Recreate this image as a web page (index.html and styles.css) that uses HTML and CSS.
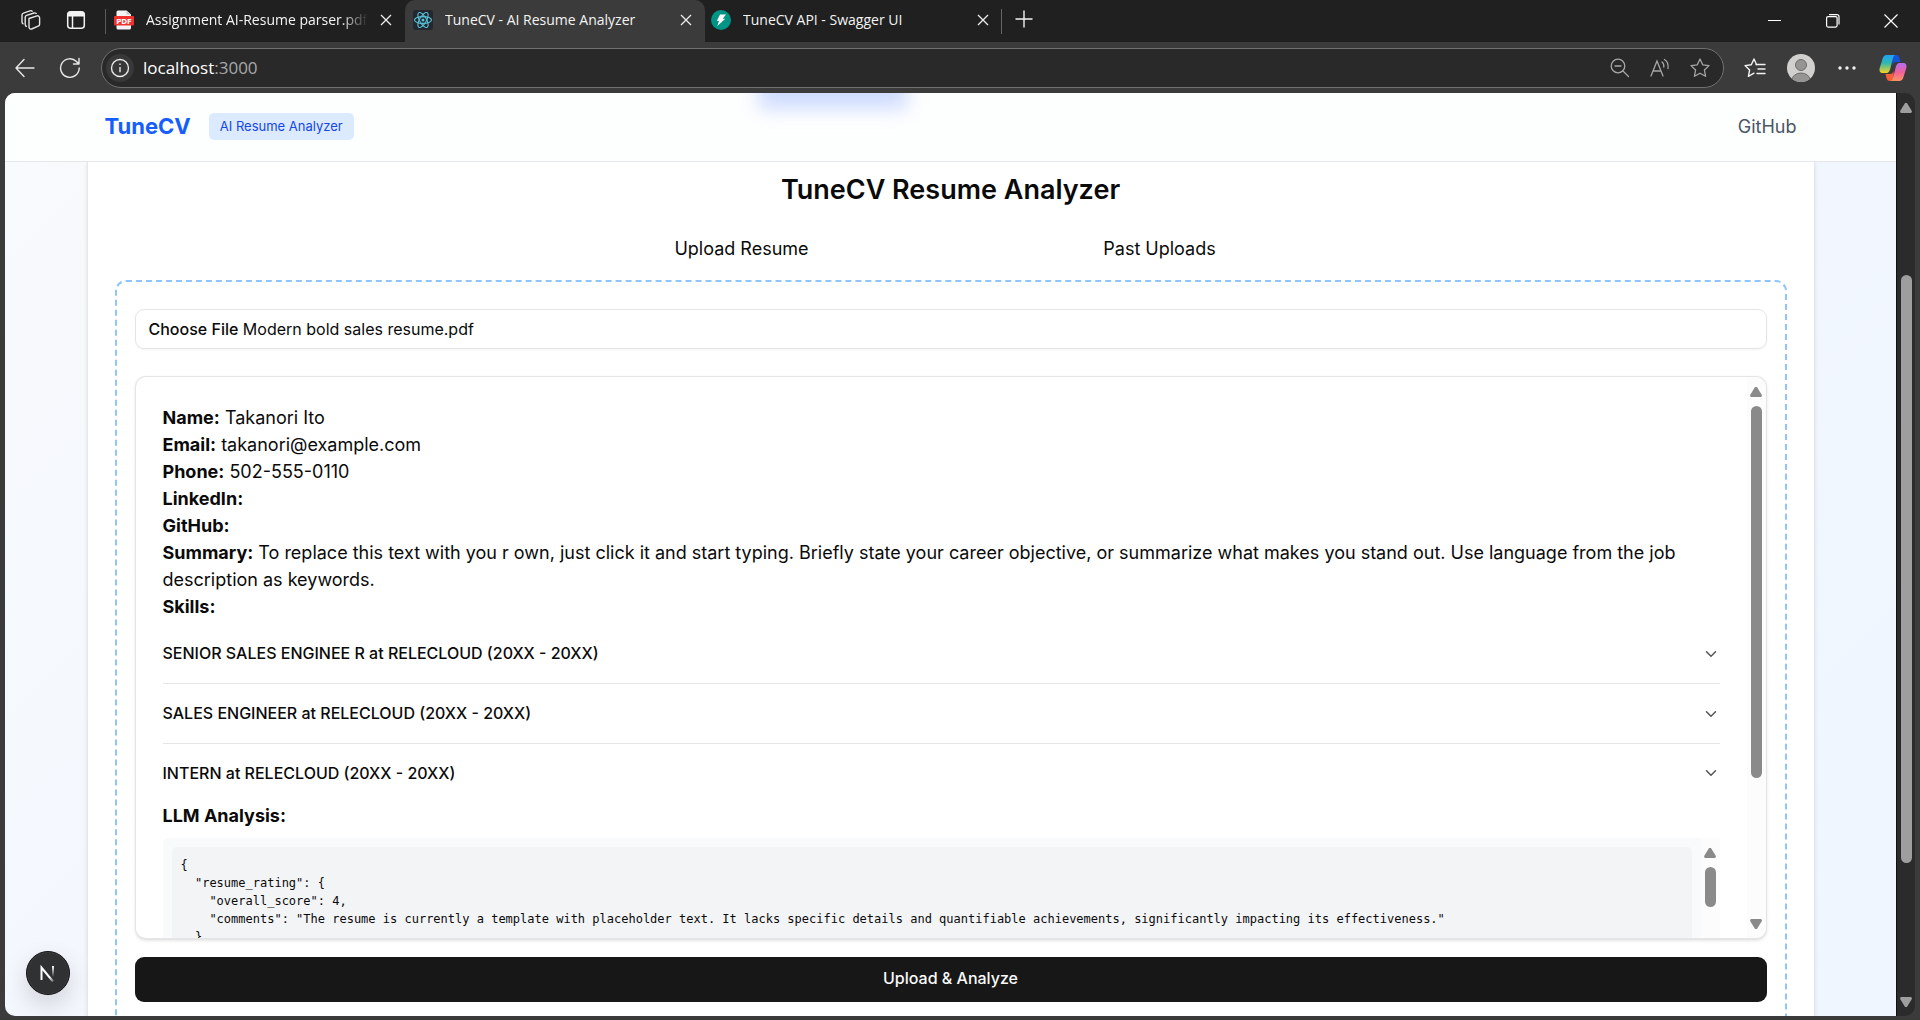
FILE: index.html
```html
<!DOCTYPE html>
<html lang="en">
<head>
<meta charset="utf-8">
<title>TuneCV - AI Resume Analyzer</title>
<link rel="stylesheet" href="styles.css">
</head>
<body>
<div class="browser">
  <div class="titlebar">
    <div class="title-tools">
      <button class="icon-btn" aria-label="Workspaces"><svg width="22" height="22" viewBox="0 0 22 22" fill="none" stroke="#e6e6e6" stroke-width="1.4" stroke-linejoin="round"><path d="M9 9.500l8-2.600a2 2 0 0 1 2.600 1.900v6.500a2 2 0 0 1-1.400 1.900L11.600 20a2 2 0 0 1-2.600-1.900z"/><path d="M7 17.500a2 2 0 0 1-1.800-2V8.300a2 2 0 0 1 1.400-1.900L14 4c1.200-.3 2.200.2 2.500 1"/><path d="M3.500 15A2 2 0 0 1 2 13V6a2 2 0 0 1 1.400-1.900L10 1.800c1-.3 2 0 2.500.8"/></svg></button>
      <button class="icon-btn" aria-label="Tab actions"><svg width="20" height="20" viewBox="0 0 20 20" fill="none"><rect x="1.700" y="1.700" width="16.600" height="16.600" rx="3" stroke="#f2f2f2" stroke-width="1.500"/><path d="M1.500 6.500V4.500a3 3 0 0 1 3-3h11a3 3 0 0 1 3 3v2z" fill="#f2f2f2"/><path d="M6.500 6v12" stroke="#f2f2f2" stroke-width="1.500"/></svg></button>
    </div>
    <div class="tab tab-first">
      <svg width="20" height="20" viewBox="0 0 20 20"><path d="M2.500 2a1.500 1.500 0 0 1 1.500-1.500h8.500l4.500 4V18a1.500 1.500 0 0 1-1.500 1.500H4A1.500 1.500 0 0 1 2.500 18z" fill="#f4f4f4"/><path d="M12.500.5v4H17z" fill="#c9c9c9"/><rect y="6" width="20" height="9.500" rx="1" fill="#f0322f"/><text x="10" y="13.500" text-anchor="middle" class="pdf-mark">PDF</text></svg>
      <span class="tab-title fade">Assignment AI-Resume parser.pdf</span>
      <button class="close" aria-label="Close tab"><svg width="12" height="12" viewBox="0 0 12 12" stroke="#eee" stroke-width="1.300"><path d="M1 1l10 10M11 1L1 11"/></svg></button>
    </div>
    <div class="tab tab-active">
      <svg width="20" height="20" viewBox="0 0 20 20" fill="none" stroke="#58c4dc" stroke-width="1.100"><rect width="20" height="20" rx="3" fill="#23272f" stroke="none"/><ellipse cx="10" cy="10" rx="8.500" ry="3.400"/><ellipse cx="10" cy="10" rx="8.500" ry="3.400" transform="rotate(60 10 10)"/><ellipse cx="10" cy="10" rx="8.500" ry="3.400" transform="rotate(120 10 10)"/><circle cx="10" cy="10" r="1.500" fill="#58c4dc" stroke="none"/></svg>
      <span class="tab-title">TuneCV - AI Resume Analyzer</span>
      <button class="close" aria-label="Close tab"><svg width="12" height="12" viewBox="0 0 12 12" stroke="#eee" stroke-width="1.300"><path d="M1 1l10 10M11 1L1 11"/></svg></button>
    </div>
    <div class="tab tab-last">
      <svg width="20" height="20" viewBox="0 0 20 20"><circle cx="10" cy="10" r="10" fill="#009485"/><path d="M9 4.500h6l-3.300 4.200h2.600L6.300 16l1.700-5H5.800z" fill="#fff"/></svg>
      <span class="tab-title">TuneCV API - Swagger UI</span>
      <button class="close" aria-label="Close tab"><svg width="12" height="12" viewBox="0 0 12 12" stroke="#eee" stroke-width="1.300"><path d="M1 1l10 10M11 1L1 11"/></svg></button>
    </div>
    <button class="icon-btn new-tab" aria-label="New tab"><svg width="18" height="18" viewBox="0 0 18 18" stroke="#f2f2f2" stroke-width="1.400"><path d="M9 .5v17M.5 9h17"/></svg></button>
    <div class="window-controls">
      <button class="icon-btn" aria-label="Minimize"><svg width="14" height="14" viewBox="0 0 14 14" stroke="#fff"><path d="M0 6.500h13"/></svg></button>
      <button class="icon-btn" aria-label="Restore"><svg width="14" height="14" viewBox="0 0 14 14" fill="none" stroke="#fff" stroke-width="1.200"><rect x=".600" y="2.600" width="10.500" height="10.500" rx="1.500"/><path d="M3 .6h8a2 2 0 0 1 2 2v8"/></svg></button>
      <button class="icon-btn" aria-label="Close"><svg width="14" height="14" viewBox="0 0 14 14" stroke="#fff" stroke-width="1.200"><path d="M.5.5l13 13M13.500.5l-13 13"/></svg></button>
    </div>
  </div>

  <div class="toolbar">
    <button class="icon-btn" aria-label="Back"><svg width="20" height="20" viewBox="0 0 20 20" fill="none" stroke="#e8e8e8" stroke-width="1.400" stroke-linecap="round" stroke-linejoin="round"><path d="M19 10H1M9 1.500L1 10l8 8.500"/></svg></button>
    <button class="icon-btn" aria-label="Refresh"><svg width="22" height="22" viewBox="0 0 22 22" fill="none" stroke="#e8e8e8" stroke-width="1.400" stroke-linecap="round" stroke-linejoin="round"><path d="M20.200 11A9.300 9.300 0 1 1 17.500 4.500L19.800 7M20 1.500V7h-5.500"/></svg></button>
    <div class="address">
      <button class="site-info" aria-label="Site information"><svg width="20" height="20" viewBox="0 0 20 20" fill="none" stroke="#e8e8e8" stroke-width="1.400"><circle cx="10" cy="10" r="8.500"/><path d="M10 9v5.200M10 5.500v1.600"/></svg></button>
      <div class="url"><span class="host">localhost</span>:3000</div>
      <div class="address-actions">
        <button class="icon-btn" aria-label="Zoom"><svg width="20" height="20" viewBox="0 0 20 20" fill="none" stroke="#a6a6a6" stroke-width="1.300" stroke-linecap="round"><circle cx="8" cy="8" r="6.800"/><path d="M13 13l5.500 5.500M5 8h6"/></svg></button>
        <button class="icon-btn" aria-label="Read aloud"><svg width="20" height="20" viewBox="0 0 20 20" fill="none" stroke="#a6a6a6" stroke-width="1.300" stroke-linecap="round"><path d="M1 18L7 3l6 15M3 13h8M12 4c1.500 1 2 3 1.800 5M14.500 1.500c3 1.800 4 5 3.500 9"/></svg></button>
        <button class="icon-btn" aria-label="Add to favorites"><svg width="20" height="20" viewBox="0 0 20 20" fill="none" stroke="#a6a6a6" stroke-width="1.300" stroke-linejoin="round"><path d="M10 1l2.700 5.800 6.300.8-4.600 4.400 1.200 6.300L10 15.200l-5.600 3.100L5.600 12 1 7.600l6.300-.8z"/></svg></button>
      </div>
    </div>
    <div class="toolbar-actions">
      <button class="icon-btn" aria-label="Favorites"><svg width="22" height="20" viewBox="0 0 22 20" fill="none" stroke="#f2f2f2" stroke-width="1.400" stroke-linejoin="round" stroke-linecap="round"><path d="M12.600 6.800L10 1 7.300 6.800 1 7.600l4.600 4.400-1.200 6.300 5.600-3.100M12 6.500h9M14 11h7M13 15.500h8"/></svg></button>
      <button class="icon-btn" aria-label="Profile"><svg width="28" height="28" viewBox="0 0 28 28"><defs><clipPath id="face"><circle cx="14" cy="14" r="14"/></clipPath></defs><g clip-path="url(#face)"><rect width="28" height="28" fill="#d2d0ce"/><circle cx="14" cy="11" r="5.500" fill="#979593" stroke="#6e6c6a"/><ellipse cx="14" cy="26" rx="9" ry="7" fill="#979593" stroke="#6e6c6a"/></g></svg></button>
      <button class="icon-btn more" aria-label="Settings and more"><svg width="18" height="4" viewBox="0 0 18 4" fill="#f2f2f2"><circle cx="2" cy="2" r="1.700"/><circle cx="9" cy="2" r="1.700"/><circle cx="16" cy="2" r="1.700"/></svg></button>
      <button class="icon-btn" aria-label="Copilot"><svg width="28" height="28" viewBox="0 0 28 28"><defs><linearGradient id="cl" x1="0" y1="0" x2="0" y2="1"><stop offset="0" stop-color="#1fa2f5"/><stop offset=".45" stop-color="#2fb8b0"/><stop offset="1" stop-color="#f7d321"/></linearGradient><linearGradient id="cr" x1="0" y1="0" x2="0" y2="1"><stop offset="0" stop-color="#b46cf5"/><stop offset=".5" stop-color="#f0609c"/><stop offset="1" stop-color="#ff9560"/></linearGradient></defs><path d="M13 1h4c2 0 3 1 3.500 3l1 4h-4.500c-2 0-3 1-3.500 3z" fill="#1553d8"/><path d="M15 27h-4c-2 0-3-1-3.500-3l-1-4h4.500c2 0 3-1 3.500-3z" fill="#f2603a"/><path d="M8 1h9c-2 0-2.600 1.500-3 3l-2.800 11c-.6 2-1.700 4-3.700 4H4c-3 0-4-2-3.300-5L3.500 5C4.200 2.500 5.500 1 8 1z" fill="url(#cl)"/><path d="M20 27h-9c2 0 2.600-1.500 3-3l2.800-11c.6-2 1.700-4 3.700-4H24c3 0 4 2 3.300 5l-2.800 9c-.7 2.500-2 4-4.500 4z" fill="url(#cr)"/></svg></button>
    </div>
  </div>

  <div class="viewport">
    <div class="page">
      <header class="site-header">
        <div class="glow"></div>
        <div class="header-inner">
          <span class="brand">TuneCV</span>
          <span class="badge">AI Resume Analyzer</span>
          <a class="nav-link" href="#github">GitHub</a>
        </div>
      </header>
      <main class="card">
        <h1>TuneCV Resume Analyzer</h1>
        <div class="tabs" role="tablist">
          <button role="tab" aria-selected="true">Upload Resume</button>
          <button role="tab" aria-selected="false">Past Uploads</button>
        </div>
        <section class="dropzone">
          <label class="file-field"><span class="choose">Choose File</span> Modern bold sales resume.pdf<input type="file" class="file-input"></label>
          <div class="result">
            <div class="result-body">
              <p><strong>Name:</strong> Takanori Ito</p>
              <p><strong>Email:</strong> takanori@example.com</p>
              <p><strong>Phone:</strong> 502-555-0110</p>
              <p><strong>LinkedIn:</strong></p>
              <p><strong>GitHub:</strong></p>
              <p><strong>Summary:</strong> To replace this text with you r own, just click it and start typing. Briefly state your career objective, or summarize what makes you stand out. Use language from the job description as keywords.</p>
              <p><strong>Skills:</strong></p>
              <div class="accordion">
                <button class="job">SENIOR SALES ENGINEE R at RELECLOUD (20XX - 20XX)<svg width="18" height="18" viewBox="0 0 24 24" fill="none" stroke="#555" stroke-width="2" stroke-linecap="round" stroke-linejoin="round"><path d="m6 9 6 6 6-6"/></svg></button>
                <button class="job">SALES ENGINEER at RELECLOUD (20XX - 20XX)<svg width="18" height="18" viewBox="0 0 24 24" fill="none" stroke="#555" stroke-width="2" stroke-linecap="round" stroke-linejoin="round"><path d="m6 9 6 6 6-6"/></svg></button>
                <button class="job">INTERN at RELECLOUD (20XX - 20XX)<svg width="18" height="18" viewBox="0 0 24 24" fill="none" stroke="#555" stroke-width="2" stroke-linecap="round" stroke-linejoin="round"><path d="m6 9 6 6 6-6"/></svg></button>
              </div>
              <p><strong>LLM Analysis:</strong></p>
              <div class="analysis">
                <pre>{
  "resume_rating": {
    "overall_score": 4,
    "comments": "The resume is currently a template with placeholder text. It lacks specific details and quantifiable achievements, significantly impacting its effectiveness."
  }
}</pre>
                <div class="scrollbar analysis-bar"><i class="arrow up"></i><i class="thumb"></i></div>
              </div>
            </div>
            <div class="scrollbar result-bar"><i class="arrow up"></i><i class="thumb"></i><i class="arrow down"></i></div>
          </div>
          <button class="submit">Upload &amp; Analyze</button>
        </section>
      </main>
      <button class="dev-badge" aria-label="Open Next.js dev tools"><svg width="44" height="44" viewBox="0 0 44 44" fill="none"><defs><linearGradient id="n1" x1="18" y1="18" x2="28" y2="31" gradientUnits="userSpaceOnUse"><stop offset=".6" stop-color="#fff"/><stop offset="1" stop-color="#fff" stop-opacity=".2"/></linearGradient><linearGradient id="n2" x1="0" y1="15" x2="0" y2="26" gradientUnits="userSpaceOnUse"><stop stop-color="#fff"/><stop offset="1" stop-color="#fff" stop-opacity="0"/></linearGradient></defs><path d="M15.500 29V16.500L27 30.500" stroke="url(#n1)" stroke-width="2"/><path d="M27 15v11" stroke="url(#n2)" stroke-width="2"/></svg></button>
    </div>
    <div class="scrollbar page-bar"><i class="arrow up"></i><i class="thumb"></i><i class="arrow down"></i></div>
  </div>
</div>
</body>
</html>
```
FILE: styles.css
```css
* { box-sizing: border-box; }
body { margin: 0; background: #3b3b3b; }
h1, p, pre { margin: 0; }
button { font: inherit; color: inherit; border: 0; background: none; padding: 0; }
svg { display: block; flex: none; }

/* Browser frame */
.browser { height: 100vh; display: flex; flex-direction: column; overflow: hidden; font-family: "Open Sans", "Noto Sans", sans-serif; }
.icon-btn { display: flex; align-items: center; justify-content: center; flex: none; }
.titlebar { flex: none; height: 42px; background: #202020; display: flex; align-items: stretch; color: #f4f4f4; font-size: 14px; }
.title-tools { display: flex; gap: 24px; padding: 0 20px; width: 105px; align-items: center; padding-bottom: 2px; }
.tab { display: flex; align-items: center; gap: 12px; width: 300px; height: 42px; padding: 0 13px 2px 9px; }
.tab-title { flex: 1; white-space: nowrap; overflow: hidden; padding-bottom: 2px; }
.fade { -webkit-mask-image: linear-gradient(90deg, #000 88%, transparent); mask-image: linear-gradient(90deg, #000 88%, transparent); }
.tab-first { border-radius: 0 0 8px 0; background: linear-gradient(#5a5a5a, #5a5a5a) 0 9px / 1px 25px no-repeat; }
.tab-active { background: #3b3b3b; border-radius: 10px 10px 0 0; padding-left: 8px; }
.tab-last { width: 297px; padding-left: 6px; background: linear-gradient(#666, #666) 100% 9px / 1px 25px no-repeat; }
.pdf-mark { font: bold 7px "DejaVu Sans", sans-serif; fill: #fff; }
.new-tab { width: 44px; padding-bottom: 4px; }
.window-controls { margin-left: auto; display: flex; }
.window-controls .icon-btn { width: 58px; }
.toolbar { flex: none; height: 51px; background: #3b3b3b; display: flex; align-items: center; gap: 24px; padding: 0 13px 0 15px; }
.address { flex: 1; height: 40px; border: 1px solid #707070; border-radius: 20px; background: #292929; display: flex; align-items: center; padding: 0 13px 0 4px; margin: 1px 0 0 -4px; gap: 9px; }
.site-info { width: 28px; height: 28px; border-radius: 50%; background: #383838; display: flex; align-items: center; justify-content: center; }
.url { flex: 1; font-size: 17px; color: #a8a8a8; padding-bottom: 2px; }
.host { color: #fff; }
.address-actions { display: flex; gap: 20px; }
.toolbar-actions { display: flex; align-items: center; gap: 21px; margin-left: -4px; }
.more { width: 22px; }

/* Scroll bars */
.scrollbar { display: flex; flex-direction: column; align-items: center; width: 19px; flex: none; background: #fcfcfc; color: #8a8a8a; }
.arrow { width: 12px; height: 10px; background: currentColor; flex: none; }
.up { clip-path: polygon(42% 0, 58% 0, 100% 82%, 94% 100%, 6% 100%, 0 82%); }
.down { clip-path: polygon(6% 0, 94% 0, 100% 18%, 58% 100%, 42% 100%, 0 18%); margin-top: auto; }
.thumb { width: 11px; border-radius: 6px; background: currentColor; margin-top: 9px; }
.page-bar { background: #2b2b2b; color: #9e9e9e; padding: 10px 0 9px; border-radius: 0 10px 10px 0; border-left: 1px solid #111; }
.page-bar .thumb { height: 65%; margin-top: 162px; }
.result-bar { padding: 10px 0 9px; border-radius: 0 10px 10px 0; }
.result-bar .thumb { height: 372px; }
.analysis-bar { padding-top: 10px; }
.analysis-bar .thumb { height: 40px; }

/* Page */
.viewport { flex: 1; min-height: 0; display: flex; margin: 0 5px 4px; }
.page { flex: 1; min-width: 0; position: relative; overflow: hidden; border-radius: 10px 0 0 10px; background: linear-gradient(135deg, #f8fafc, #f3f7fe 40%, #eff6ff); font-family: Inter, "Liberation Sans", sans-serif; font-size: 18px; line-height: 27px; color: #0a0a0a; }
.site-header { position: relative; height: 69px; overflow: hidden; background: #fdfefe; border-bottom: 1px solid #e5e7eb; }
.glow { position: absolute; top: -20px; left: 50%; width: 148px; height: 36px; margin-left: -192px; background: #cfdcff; filter: blur(9px); }
.header-inner { position: relative; max-width: 1728px; height: 67px; margin: 0 auto; padding: 0 18px; display: flex; align-items: center; gap: 18px; }
.brand { font-size: 22px; font-weight: 700; color: #155dfc; }
.badge { font-size: 13px; color: #1447e6; background: #dbeafe; border-radius: 5px; padding: 0 11px; }
.nav-link { margin-left: auto; color: #4a5565; text-decoration: none; }
.card { max-width: 1728px; margin: 0 auto; padding: 10px 27px 27px; background: #fff; border: 1px solid #e5e7eb; border-top: 0; box-shadow: 0 1px 4px #0000001a; }
h1 { font-size: 27px; line-height: 36px; font-weight: 600; text-align: center; }
.tabs { width: 50%; margin: 27px auto 18px; display: grid; grid-template-columns: 1fr 1fr; }
.tabs button { text-align: center; }
.dropzone { border: 2px dashed #8ec5ff; border-radius: 11px; padding: 27px 18px 40px; display: flex; flex-direction: column; }
.file-field { position: relative; height: 40px; border: 1px solid #e5e5e5; border-radius: 9px; padding: 6px 13px; font-size: 16px; box-shadow: 0 1px 2px #0000000d; }
.choose { font-weight: 500; }
.file-input { position: absolute; inset: 0; width: 100%; opacity: 0; }
.result { margin-top: 27px; height: 564px; display: flex; overflow: hidden; border: 1px solid #e5e5e5; border-bottom-width: 2px; border-radius: 11px; box-shadow: 0 1px 3px #0000001a; }
.result-body { flex: 1; min-width: 0; padding: 27px; }
.accordion { margin-top: 4px; }
.job { width: 100%; height: 60px; display: flex; justify-content: space-between; align-items: center; border-bottom: 1px solid #e5e5e5; font-size: 16px; font-weight: 500; }
.job:last-child { border: 0; height: 58px; }
.analysis { margin-top: 9px; display: flex; background: #f9fafb; border-radius: 5px; height: 216px; }
.analysis pre { flex: 1; margin: 9px; padding: 9px; background: #f3f4f6; border-radius: 5px; font: 12px/18px Consolas, "DejaVu Sans Mono", monospace; overflow: hidden; }
.submit { margin-top: 17px; height: 45px; border-radius: 9px; background: #171717; color: #fafafa; font-size: 16px; font-weight: 500; padding-bottom: 2px; }
.dev-badge { position: absolute; left: 21px; bottom: 21px; width: 44px; height: 44px; border-radius: 50%; background: #303133; border: 1px solid #111; box-shadow: 0 0 0 1px #55555555 inset, 0 10px 24px #00000026; display: flex; align-items: center; justify-content: center; }
```
